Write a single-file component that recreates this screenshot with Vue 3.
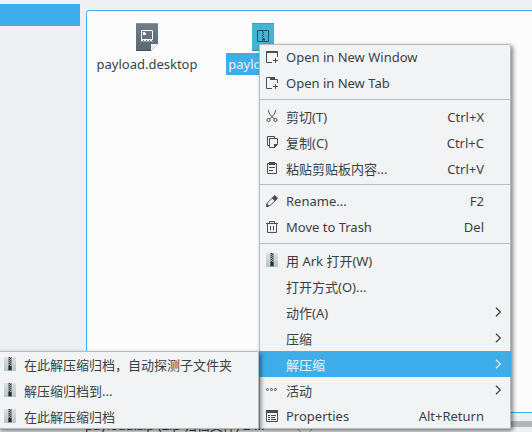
<script setup>
const menu = [
  { icon: 'window', label: 'Open in New Window' },
  { icon: 'tab', label: 'Open in New Tab' },
  { sep: true },
  { icon: 'cut', label: '剪切(T)', key: 'Ctrl+X', cjk: true },
  { icon: 'copy', label: '复制(C)', key: 'Ctrl+C', cjk: true },
  { icon: 'paste', label: '粘贴剪贴板内容...', key: 'Ctrl+V', cjk: true },
  { sep: true },
  { icon: 'rename', label: 'Rename...', key: 'F2' },
  { icon: 'trash', label: 'Move to Trash', key: 'Del' },
  { sep: true },
  { icon: 'ark', label: '用 Ark 打开(W)', cjk: true },
  { label: '打开方式(O)...', cjk: true },
  { label: '动作(A)', sub: true, cjk: true },
  { label: '压缩', sub: true, cjk: true },
  { label: '解压缩', sub: true, active: true, cjk: true },
  { icon: 'dots', label: '活动', sub: true, cjk: true },
  { icon: 'props', label: 'Properties', key: 'Alt+Return' },
]
const submenu = ['在此解压缩归档，自动探测子文件夹', '解压缩归档到...', '在此解压缩归档']
</script>

<template>
  <div class="desktop">
    <svg class="defs" width="0" height="0">
      <linearGradient id="ark-bg" x1="0" y1="0" x2="0" y2="1">
        <stop offset="0" stop-color="#d8e0e3" /><stop offset="1" stop-color="#b9c4c9" />
      </linearGradient>
      <linearGradient id="slate" x1="0" y1="0" x2="0" y2="1">
        <stop offset="0" stop-color="#717d88" /><stop offset="1" stop-color="#596774" />
      </linearGradient>
    </svg>

    <div class="sidebar"><div class="place"></div></div>
    <div class="main">
      <div class="view">
        <div class="file">
          <svg width="22" height="28" viewBox="0 0 22 28">
            <path d="M0 0H22V21L15 28H0Z" fill="url(#slate)" />
            <path d="M0 .5H22" stroke="#8b959e" />
            <path d="M0 27.5H15" stroke="#43505c" />
            <path d="M15 28V21H22Z" fill="#eceeef" />
            <path d="M5.500 7.500H16.500V16.500H5.500Z" fill="none" stroke="#fff" />
            <path d="M7 9H9V10H10V12H7Z" fill="#fff" />
            <path d="M5 17.500H17" stroke="#fff" stroke-dasharray="2 1" />
            <path d="M5 18.500H17" stroke="#fff" stroke-opacity=".3" />
          </svg>
          <span class="name">payload.desktop</span>
        </div>
        <div class="file">
          <svg width="22" height="28" viewBox="0 0 22 28">
            <path d="M0 0H22V28H0Z" fill="#43b4d2" />
            <path d="M0 .5H22" stroke="#3a9fba" />
            <path d="M0 27.500H22" stroke="#2d8ba5" />
            <path d="M5.500 7.500H16.500V18.500H5.500Z" fill="none" stroke="#1f5263" />
            <path d="M10.500 8V16M11.500 9V17" stroke="#1f5263" stroke-dasharray="1 1" />
            <path d="M10 15.500H13V17.500H10Z" fill="#1f5263" />
          </svg>
          <span class="name selected">payload.zip</span>
        </div>
      </div>
      <div class="status">
        <span>payload.zip (Zip 归档文件) 2 ...</span>
        <i class="knob"></i>
        <b class="track"></b>
      </div>
    </div>

    <div class="menu context">
      <template v-for="(m, i) in menu" :key="i">
        <div v-if="m.sep" class="sep"></div>
        <div v-else class="item" :class="{ active: m.active, cjk: m.cjk }">
          <span class="icon">
            <svg v-if="m.icon" width="14" height="14" viewBox="0 0 14 14" fill="none" stroke="#4b4e51">
              <template v-if="m.icon === 'window'">
                <path d="M7 12.500H1.500V1.500H12.500V7" /><path d="M1 2H13" stroke-width="2" />
                <path d="M8 10.500H13M10.500 8V13" />
              </template>
              <template v-else-if="m.icon === 'tab'">
                <path d="M7 12.500H1.500V1.500H5.500V3.500H12.500V7" /><path d="M5 1H10V4H5Z" fill="#4b4e51" stroke="none" />
                <path d="M8 10.500H13M10.500 8V13" />
              </template>
              <template v-else-if="m.icon === 'cut'">
                <path d="M3.500 1C3.500 4 5 6 9.500 10M10.500 1C10.500 4 9 6 4.500 10" />
                <circle cx="3.500" cy="11" r="1.600" /><circle cx="10.500" cy="11" r="1.600" />
              </template>
              <template v-else-if="m.icon === 'copy'">
                <path d="M4 10.500H2.500V1.500H9.500V3M4.500 3.500H12.500V9.500L9.500 12.500H4.500Z" />
                <path d="M9 13V9H13Z" fill="#4b4e51" stroke="none" />
              </template>
              <template v-else-if="m.icon === 'paste'">
                <path d="M2.500 2.500H11.500V12.500H2.500Z" /><path d="M4 1H10V4H4Z" fill="#4b4e51" stroke="none" />
                <path d="M4 6.500H10M4 9.500H8" />
              </template>
              <template v-else-if="m.icon === 'rename'">
                <path d="M1.500 12.500L2.300 9L8.200 3.100L10.900 5.800L5 11.700Z" />
                <path d="M7.300 4L9.800 1.400L12.600 4.200L10 6.800Z" fill="#4b4e51" />
                <path d="M1 13L2 9.500L4.500 12Z" fill="#4b4e51" stroke="none" />
              </template>
              <template v-else-if="m.icon === 'trash'">
                <path d="M1 3.500H13M4.500 3V1.500H9.500V3M2.500 4V12.500H11.500V4M5.500 6V10.500M8.500 6V10.500" />
              </template>
              <template v-else-if="m.icon === 'ark'">
                <path d="M1 0H13V14H1Z" fill="url(#ark-bg)" stroke="none" />
                <path d="M5 0H9V14H5Z" fill="#969b9e" stroke="none" />
                <path d="M6.500 0V9M7.500 1V10" stroke="#3e4447" stroke-dasharray="1 1" />
                <path d="M5.500 9H8.500V13H5.500Z" fill="#25292b" stroke="none" />
              </template>
              <template v-else-if="m.icon === 'dots'">
                <circle cx="2.500" cy="6.500" r="1" /><circle cx="6.500" cy="6.500" r="1" /><circle cx="10.500" cy="6.500" r="1" />
              </template>
              <template v-else>
                <path d="M1.500 1.500H12.500V12.500H1.500Z" /><path d="M1 2.500H13" stroke-width="3" />
                <path d="M3 6.500H5M3 8.500H5M3 10.500H5M6 6.500H11M6 8.500H10M6 10.500H11" />
              </template>
            </svg>
          </span>
          <span class="label">{{ m.label }}</span>
          <span v-if="m.key" class="key">{{ m.key }}</span>
          <svg v-if="m.sub" class="arrow" width="7" height="10" viewBox="0 0 7 10" fill="none" stroke="currentColor" stroke-width="1.200">
            <path d="M1 .8L5.300 5L1 9.200" />
          </svg>
        </div>
      </template>
    </div>

    <div class="menu extract">
      <div v-for="s in submenu" :key="s" class="item cjk">
        <span class="icon">
          <svg width="14" height="14" viewBox="0 0 14 14" fill="none">
            <path d="M1 0H13V14H1Z" fill="url(#ark-bg)" />
            <path d="M5 0H9V14H5Z" fill="#969b9e" />
            <path d="M6.500 0V9M7.500 1V10" stroke="#3e4447" stroke-dasharray="1 1" />
            <path d="M5.500 9H8.500V13H5.500Z" fill="#25292b" />
          </svg>
        </span>
        <span class="label">{{ s }}</span>
      </div>
    </div>
  </div>
</template>

<style>
body { margin: 0; overflow: hidden; }
</style>
<style scoped>
.desktop {
  position: relative;
  display: flex;
  width: 532px;
  height: 432px;
  overflow: hidden;
  background: #eff0f1;
  color: #3b3f43;
  font: 13px/26px "Noto Sans", "Noto Sans CJK SC", sans-serif;
}
.defs { position: absolute; }
.sidebar { width: 86px; padding-top: 4px; box-sizing: border-box; flex: none; }
.place { width: 80px; height: 22px; background: #3daee9; }
.main { flex: none; width: 460px; padding-top: 10px; }
.view {
  display: flex;
  box-sizing: border-box;
  height: 403px;
  padding: 12px 0 0 2px;
  border: 1px solid #3daee9;
  border-radius: 3px 0 0 0;
  background: #fcfcfc;
}
.file { width: 116px; display: flex; flex-direction: column; align-items: center; }
.file svg { display: block; }
.name { margin-top: 2px; height: 22px; line-height: 22px; padding: 0 2px; }
.selected { background: #3daee9; color: #eff0f1; }
.status { display: flex; align-items: center; height: 26px; line-height: 26px; }
.status span { width: 212px; margin: 0 0 2px -1px; white-space: nowrap; overflow: hidden; }
.knob { width: 16px; height: 16px; box-sizing: border-box; border: 1px solid #9b9d9f; border-radius: 50%; }
.track { flex: 1; height: 6px; margin-bottom: 4px; background: #b5b6b8; }
.menu { position: absolute; background: #f2f3f5; border-radius: 2px; box-shadow: 2px 2px 4px rgba(0, 0, 0, .5); }
.menu::after { content: ""; position: absolute; inset: 0; border: 1px solid #b9babc; border-radius: 2px; pointer-events: none; }
.context { z-index: 1; left: 259px; top: 44px; width: 252px; height: 385px; }
.extract { z-index: 2; left: -3px; top: 351px; width: 262px; height: 78px; }
.item { display: flex; align-items: center; height: 26px; padding: 0 27px 0 6px; white-space: nowrap; }
.extract .item { padding-left: 6px; }
.icon { width: 14px; height: 14px; margin-right: 7px; flex: none; }
.icon svg { display: block; }
.label { flex: 1; }
.cjk .label, .cjk .key { padding-top: 2px; line-height: 24px; }
.active { position: relative; z-index: 1; background: #3daee9; color: #eff0f1; }
.arrow { margin-right: -18px; }
.sep { height: 1px; margin: 3px 0; background: #b9babc; }
</style>
